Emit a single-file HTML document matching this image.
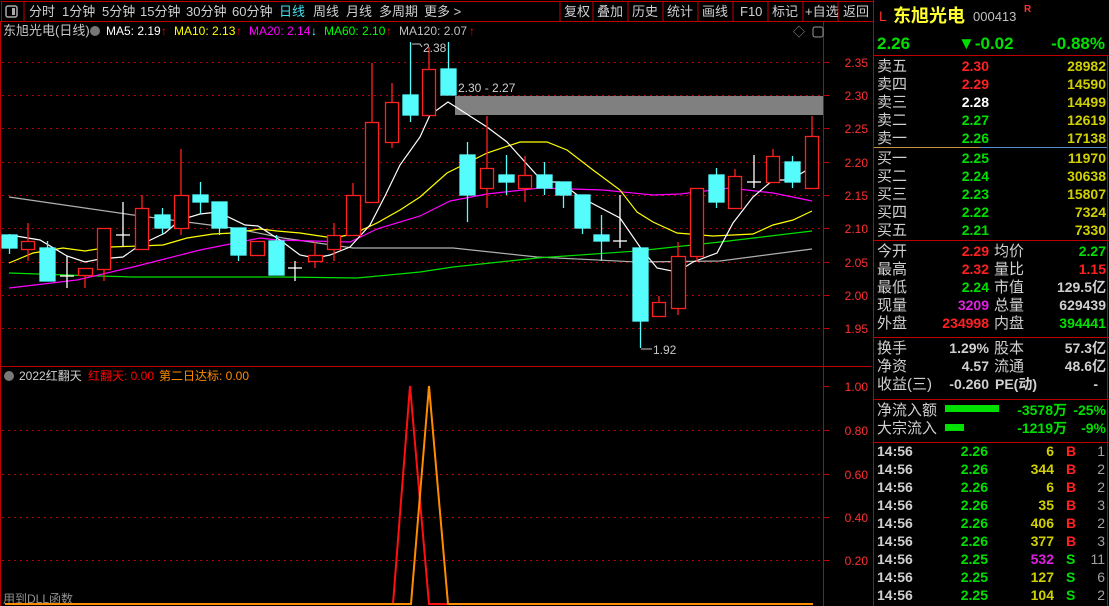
<!DOCTYPE html>
<html><head><meta charset="utf-8"><style>
html,body{margin:0;padding:0;background:#000;width:1109px;height:606px;overflow:hidden}
svg{display:block}
text{font-family:"Liberation Sans","Noto Sans CJK SC",sans-serif}
</style></head><body>
<svg width="1109" height="606" viewBox="0 0 1109 606" xmlns="http://www.w3.org/2000/svg">
<rect width="1109" height="606" fill="#000"/>
<g stroke="#c00000" stroke-width="1" fill="none">
<rect x="1.5" y="1.5" width="872" height="20"/>
<line x1="24" y1="2" x2="24" y2="21"/>
<line x1="560" y1="2" x2="560" y2="21"/>
<line x1="593" y1="2" x2="593" y2="21"/><line x1="628" y1="2" x2="628" y2="21"/><line x1="663" y1="2" x2="663" y2="21"/><line x1="698" y1="2" x2="698" y2="21"/><line x1="733" y1="2" x2="733" y2="21"/><line x1="768" y1="2" x2="768" y2="21"/><line x1="803" y1="2" x2="803" y2="21"/><line x1="838" y1="2" x2="838" y2="21"/>
<line x1="0.5" y1="21" x2="0.5" y2="606"/>
<line x1="823.5" y1="21" x2="823.5" y2="606"/>
<line x1="0" y1="366.5" x2="872" y2="366.5"/>
<line x1="873.5" y1="0" x2="873.5" y2="606"/>
<line x1="873" y1="55.5" x2="1109" y2="55.5"/>
<line x1="873" y1="240.5" x2="1109" y2="240.5"/>
<line x1="873" y1="337.5" x2="1109" y2="337.5"/>
<line x1="873" y1="399.5" x2="1109" y2="399.5"/>
<line x1="873" y1="442.5" x2="1109" y2="442.5"/>
<line x1="1107.5" y1="55" x2="1107.5" y2="606"/>
</g>
<line x1="874" y1="147.5" x2="980" y2="147.5" stroke="#c89040"/>
<line x1="980" y1="147.5" x2="1107" y2="147.5" stroke="#5090d0"/>
<rect x="6" y="6" width="11" height="11" rx="2" fill="none" stroke="#aaa" stroke-width="1.5"/><rect x="12" y="8" width="3" height="7" fill="#aaa"/>
<g font-size="13" fill="#d0d0d0">
<text x="29" y="16">分时</text><text x="62" y="16">1分钟</text><text x="102" y="16">5分钟</text><text x="140" y="16">15分钟</text><text x="186" y="16">30分钟</text><text x="232" y="16">60分钟</text><text x="279" y="16" fill="#40e0f0">日线</text><text x="313" y="16">周线</text><text x="346" y="16">月线</text><text x="379" y="16">多周期</text><text x="424" y="16">更多 &gt;</text>
<text x="564" y="16">复权</text><text x="597" y="16">叠加</text><text x="632" y="16">历史</text><text x="667" y="16">统计</text><text x="702" y="16">画线</text><text x="740" y="16">F10</text><text x="772" y="16">标记</text><text x="805" y="16">+自选</text><text x="843" y="16">返回</text>
</g>
<g font-size="12">
<text x="3" y="35" fill="#c8c8c8" font-size="13">东旭光电(日线)</text>
<circle cx="95" cy="31" r="5" fill="#777"/>
<text x="106" y="35" fill="#fff">MA5: 2.19</text><text x="161" y="35" fill="#f00">↑</text>
<text x="174" y="35" fill="#ff0">MA10: 2.13</text><text x="236" y="35" fill="#f00">↑</text>
<text x="249" y="35" fill="#f0f">MA20: 2.14</text><text x="311" y="35" fill="#4ff">↓</text>
<text x="324" y="35" fill="#0f0">MA60: 2.10</text><text x="386" y="35" fill="#f00">↑</text>
<text x="399" y="35" fill="#c0c0c0">MA120: 2.07</text><text x="469" y="35" fill="#f00">↑</text>
</g>
<text x="793" y="36" font-size="12" fill="#999">◇</text>
<rect x="813" y="27" width="10" height="10" rx="2" fill="none" stroke="#999"/>
<g stroke="#b00000" stroke-dasharray="2,4" stroke-width="1">
<line x1="2" y1="62.5" x2="823" y2="62.5"/><line x1="2" y1="95.5" x2="823" y2="95.5"/><line x1="2" y1="128.5" x2="823" y2="128.5"/><line x1="2" y1="162.5" x2="823" y2="162.5"/><line x1="2" y1="195.5" x2="823" y2="195.5"/><line x1="2" y1="228.5" x2="823" y2="228.5"/><line x1="2" y1="262.5" x2="823" y2="262.5"/><line x1="2" y1="295.5" x2="823" y2="295.5"/><line x1="2" y1="328.5" x2="823" y2="328.5"/>
<line x1="2" y1="430.5" x2="823" y2="430.5"/><line x1="2" y1="474.5" x2="823" y2="474.5"/><line x1="2" y1="517.5" x2="823" y2="517.5"/><line x1="2" y1="560.5" x2="823" y2="560.5"/>
</g>
<g stroke="#c00000">
<line x1="823" y1="62.5" x2="829" y2="62.5"/><line x1="823" y1="95.5" x2="829" y2="95.5"/><line x1="823" y1="128.5" x2="829" y2="128.5"/><line x1="823" y1="162.5" x2="829" y2="162.5"/><line x1="823" y1="195.5" x2="829" y2="195.5"/><line x1="823" y1="228.5" x2="829" y2="228.5"/><line x1="823" y1="262.5" x2="829" y2="262.5"/><line x1="823" y1="295.5" x2="829" y2="295.5"/><line x1="823" y1="328.5" x2="829" y2="328.5"/>
<line x1="823" y1="386.5" x2="829" y2="386.5"/><line x1="823" y1="430.5" x2="829" y2="430.5"/><line x1="823" y1="474.5" x2="829" y2="474.5"/><line x1="823" y1="517.5" x2="829" y2="517.5"/><line x1="823" y1="560.5" x2="829" y2="560.5"/>
</g>
<g font-size="12" fill="#ff3030" text-anchor="end">
<text x="868" y="67">2.35</text><text x="868" y="100">2.30</text><text x="868" y="133">2.25</text><text x="868" y="167">2.20</text><text x="868" y="200">2.15</text><text x="868" y="233">2.10</text><text x="868" y="267">2.05</text><text x="868" y="300">2.00</text><text x="868" y="333">1.95</text>
<text x="868" y="391">1.00</text><text x="868" y="435">0.80</text><text x="868" y="479">0.60</text><text x="868" y="522">0.40</text><text x="868" y="565">0.20</text>
</g>
<rect x="455" y="96" width="368" height="19" fill="#808080"/>
<text x="458" y="92" font-size="12" fill="#d0d0d0">2.30 - 2.27</text>
<g fill="none" stroke-width="1.2">
<polyline stroke="#b0b0b0" points="9,197 133,215 233,228 283,238 353,248 420,248 453,248 537,257 637,262 720,261 812,249"/>
<polyline stroke="#00e000" points="9,273 67,275 133,277 283,277 357,278 420,272 453,267 537,258 637,251 720,242 812,231"/>
<polyline stroke="#f0f" points="9,288 77,280 133,267 200,250 260,238 277,240 350,242 377,229 420,216 450,201 487,194 540,188 603,190 653,195 680,194 730,188 773,193 812,201"/>
<polyline stroke="#ff0" points="9,263 33,253 63,248 85,251 110,247 140,246 163,245 187,238 213,234 233,233 260,229 277,231 300,233 333,238 353,234 377,223 400,210 420,197 447,173 487,153 520,142 547,142 567,150 593,170 620,190 637,212 653,222 677,233 713,236 753,234 773,225 793,220 812,211"/>
<polyline stroke="#fff" points="10,235 40,240 67,256 85,262 100,259 123,257 140,245 165,233 180,220 200,214 218,212 245,225 258,226 280,240 300,255 315,258 330,255 350,247 370,225 385,196 400,165 420,137 430,115 448,102 487,127 507,142 543,182 560,182 580,197 620,218 640,247 657,268 677,272 693,262 717,253 733,223 753,197 773,180 790,180 812,167"/>
</g>
<g stroke="#ff2020" fill="#000" stroke-width="1.3">
<rect x="21.5" y="241.5" width="13" height="8"/><line x1="28" y1="223" x2="28" y2="241"/><line x1="28" y1="249" x2="28" y2="261"/>
<rect x="78.5" y="268.5" width="14" height="7"/><line x1="85" y1="275" x2="85" y2="288"/>
<rect x="97.5" y="228.5" width="13" height="41"/><line x1="104" y1="269" x2="104" y2="281"/>
<rect x="135.5" y="208.5" width="13" height="41"/><line x1="142" y1="195" x2="142" y2="208"/>
<rect x="174.5" y="195.5" width="14" height="33"/><line x1="181" y1="149" x2="181" y2="195"/><line x1="181" y1="228" x2="181" y2="235"/>
<rect x="250.5" y="241.5" width="14" height="14"/>
<rect x="308.5" y="255.5" width="14" height="6"/><line x1="315" y1="242" x2="315" y2="255"/><line x1="315" y1="261" x2="315" y2="268"/>
<rect x="327.5" y="235.5" width="13" height="14"/><line x1="334" y1="223" x2="334" y2="235"/><line x1="334" y1="249" x2="334" y2="261"/>
<rect x="346.5" y="195.5" width="14" height="40"/><line x1="353" y1="183" x2="353" y2="195"/>
<rect x="365.5" y="122.5" width="13" height="80"/><line x1="372" y1="63" x2="372" y2="122"/>
<rect x="385.5" y="102.5" width="13" height="40"/><line x1="392" y1="83" x2="392" y2="102"/><line x1="392" y1="142" x2="392" y2="148"/>
<rect x="422.5" y="69.5" width="13" height="46"/><line x1="429" y1="47" x2="429" y2="69"/>
<rect x="480.5" y="168.5" width="13" height="20"/><line x1="487" y1="116" x2="487" y2="168"/><line x1="487" y1="188" x2="487" y2="208"/>
<rect x="518.5" y="175.5" width="13" height="13"/><line x1="525" y1="156" x2="525" y2="175"/><line x1="525" y1="188" x2="525" y2="202"/>
<rect x="652.5" y="302.5" width="13" height="14"/><line x1="659" y1="296" x2="659" y2="302"/>
<rect x="671.5" y="256.5" width="14" height="52"/><line x1="678" y1="242" x2="678" y2="256"/><line x1="678" y1="308" x2="678" y2="315"/>
<rect x="690.5" y="188.5" width="13" height="68"/><line x1="697" y1="256" x2="697" y2="262"/>
<rect x="728.5" y="176.5" width="13" height="32"/><line x1="735" y1="169" x2="735" y2="176"/>
<rect x="766.5" y="156.5" width="13" height="26"/><line x1="773" y1="149" x2="773" y2="156"/>
<rect x="805.5" y="136.5" width="13" height="52"/><line x1="812" y1="116" x2="812" y2="136"/>
</g>
<g stroke="#54fcfc" fill="#54fcfc" stroke-width="1.3">
<rect x="2" y="235" width="15" height="13"/><line x1="9.5" y1="234" x2="9.5" y2="254"/>
<rect x="40" y="248" width="15" height="33"/><line x1="47.5" y1="241" x2="47.5" y2="248"/>
<rect x="155" y="215" width="15" height="13"/><line x1="162.5" y1="208" x2="162.5" y2="234"/>
<rect x="193" y="195" width="15" height="7"/><line x1="200.5" y1="182" x2="200.5" y2="214"/>
<rect x="212" y="202" width="15" height="26"/><line x1="219.5" y1="228" x2="219.5" y2="235"/>
<rect x="231" y="228" width="15" height="27"/><line x1="238.5" y1="255" x2="238.5" y2="261"/>
<rect x="269" y="241" width="15" height="34"/><line x1="276.5" y1="235" x2="276.5" y2="241"/>
<rect x="403" y="95" width="15" height="20"/><line x1="410.5" y1="42" x2="410.5" y2="122"/>
<rect x="441" y="69" width="15" height="26"/><line x1="448.5" y1="42" x2="448.5" y2="69"/>
<rect x="460" y="155" width="15" height="40"/><line x1="467.5" y1="142" x2="467.5" y2="222"/>
<rect x="499" y="175" width="15" height="7"/><line x1="506.5" y1="155" x2="506.5" y2="195"/>
<rect x="537" y="175" width="15" height="13"/><line x1="544.5" y1="162" x2="544.5" y2="195"/>
<rect x="556" y="182" width="15" height="13"/><line x1="563.5" y1="195" x2="563.5" y2="208"/>
<rect x="575" y="195" width="15" height="33"/><line x1="582.5" y1="228" x2="582.5" y2="234"/>
<rect x="594" y="235" width="15" height="6"/><line x1="601.5" y1="215" x2="601.5" y2="261"/>
<rect x="633" y="248" width="15" height="73"/><line x1="640.5" y1="321" x2="640.5" y2="348"/>
<rect x="709" y="175" width="15" height="27"/><line x1="716.5" y1="168" x2="716.5" y2="208"/>
<rect x="785" y="162" width="15" height="20"/><line x1="792.5" y1="156" x2="792.5" y2="188"/>
</g>
<g stroke="#fff" stroke-width="1.3">
<line x1="60" y1="276" x2="74" y2="276"/><line x1="67" y1="256" x2="67" y2="288"/>
<line x1="116" y1="235" x2="130" y2="235"/><line x1="123" y1="202" x2="123" y2="247"/>
<line x1="288" y1="268" x2="302" y2="268"/><line x1="295" y1="261" x2="295" y2="281"/>
<line x1="613" y1="241" x2="627" y2="241"/><line x1="620" y1="195" x2="620" y2="248"/>
<line x1="747" y1="182" x2="761" y2="182"/><line x1="754" y1="155" x2="754" y2="188"/>
</g>
<text x="423" y="52" font-size="12" fill="#c8c8c8">2.38</text>
<polyline points="412,44 420,44 422,47" fill="none" stroke="#c8c8c8"/>
<text x="653" y="354" font-size="12" fill="#c8c8c8">1.92</text>
<line x1="641" y1="349" x2="652" y2="349" stroke="#c8c8c8"/>
<circle cx="9" cy="376" r="5" fill="#777"/>
<g font-size="12">
<text x="19" y="380" fill="#d0d0d0">2022红翻天</text>
<text x="88" y="380" fill="#f00">红翻天: 0.00</text>
<text x="159" y="380" fill="#ff8c00">第二日达标: 0.00</text>
<text x="3" y="603" fill="#909090">用到DLL函数</text>
</g>
<polyline points="393,604 410,386 429,604 448,604" fill="none" stroke="#ff1010" stroke-width="2"/>
<polyline points="5,604 411,604 429,386 448,604 813,604" fill="none" stroke="#ff8c00" stroke-width="2"/>
<line x1="429" y1="604" x2="446" y2="604" stroke="#ff1010" stroke-width="2"/>
<text x="879" y="21" font-size="14" fill="#ff3030">L</text>
<text x="893" y="22" font-size="18" fill="#ffff30" font-weight="bold">东旭光电</text>
<text x="973" y="21" font-size="13" fill="#c0c0c0">000413</text>
<text x="1024" y="12" font-size="10" fill="#ff3030" font-weight="bold">R</text>
<g font-size="17" font-weight="bold" fill="#00e000">
<text x="877" y="49">2.26</text><text x="958" y="49">▼-0.02</text><text x="1105" y="49" text-anchor="end">-0.88%</text>
</g>
<g font-size="14" font-weight="bold">
<g fill="#d0d0d0" font-weight="normal" font-size="15">
<text x="877" y="71">卖五</text><text x="877" y="89">卖四</text><text x="877" y="107">卖三</text><text x="877" y="125">卖二</text><text x="877" y="143">卖一</text>
<text x="877" y="163">买一</text><text x="877" y="181">买二</text><text x="877" y="199">买三</text><text x="877" y="217">买四</text><text x="877" y="235">买五</text>
<text x="877" y="256">今开</text><text x="877" y="274">最高</text><text x="877" y="292">最低</text><text x="877" y="310">现量</text><text x="877" y="328">外盘</text>
<text x="994" y="256">均价</text><text x="994" y="274">量比</text><text x="994" y="292">市值</text><text x="994" y="310">总量</text><text x="994" y="328">内盘</text>
<text x="877" y="353">换手</text><text x="877" y="371">净资</text><text x="877" y="389">收益(三)</text>
<text x="994" y="353">股本</text><text x="994" y="371">流通</text>
<text x="877" y="415">净流入额</text><text x="877" y="433">大宗流入</text>
</g>
<g text-anchor="end">
<text x="989" y="71" fill="#ff2020">2.30</text><text x="989" y="89" fill="#ff2020">2.29</text><text x="989" y="107" fill="#fff">2.28</text><text x="989" y="125" fill="#00e000">2.27</text><text x="989" y="143" fill="#00e000">2.26</text>
<text x="989" y="163" fill="#00e000">2.25</text><text x="989" y="181" fill="#00e000">2.24</text><text x="989" y="199" fill="#00e000">2.23</text><text x="989" y="217" fill="#00e000">2.22</text><text x="989" y="235" fill="#00e000">2.21</text>
<g fill="#d0d000">
<text x="1106" y="71">28982</text><text x="1106" y="89">14590</text><text x="1106" y="107">14499</text><text x="1106" y="125">12619</text><text x="1106" y="143">17138</text>
<text x="1106" y="163">11970</text><text x="1106" y="181">30638</text><text x="1106" y="199">15807</text><text x="1106" y="217">7324</text><text x="1106" y="235">7330</text>
</g>
<text x="989" y="256" fill="#ff2020">2.29</text><text x="989" y="274" fill="#ff2020">2.32</text><text x="989" y="292" fill="#00e000">2.24</text><text x="989" y="310" fill="#e020e0">3209</text><text x="989" y="328" fill="#ff2020">234998</text>
<text x="1106" y="256" fill="#00e000">2.27</text><text x="1106" y="274" fill="#ff2020">1.15</text><text x="1106" y="292" fill="#d0d0d0">129.5亿</text><text x="1106" y="310" fill="#d0d0d0">629439</text><text x="1106" y="328" fill="#00e000">394441</text>
<text x="989" y="353" fill="#d0d0d0">1.29%</text><text x="989" y="371" fill="#d0d0d0">4.57</text><text x="989" y="389" fill="#d0d0d0">-0.260</text>
<text x="1106" y="353" fill="#d0d0d0">57.3亿</text><text x="1106" y="371" fill="#d0d0d0">48.6亿</text><text x="1098" y="389" fill="#d0d0d0">-</text>
<text x="1067" y="415" fill="#00e000">-3578万</text><text x="1106" y="415" fill="#00e000">-25%</text>
<text x="1067" y="433" fill="#00e000">-1219万</text><text x="1106" y="433" fill="#00e000">-9%</text>
</g>
<text x="995" y="389" fill="#d0d0d0">PE(动)</text>
</g>
<rect x="945" y="405" width="54" height="7" fill="#00e000"/>
<rect x="945" y="424" width="19" height="7" fill="#00e000"/>
<g font-size="14" font-weight="bold">
<g fill="#d0d0d0"><text x="877" y="456">14:56</text><text x="877" y="474">14:56</text><text x="877" y="492">14:56</text><text x="877" y="510">14:56</text><text x="877" y="528">14:56</text><text x="877" y="546">14:56</text><text x="877" y="564">14:56</text><text x="877" y="582">14:56</text><text x="877" y="600">14:56</text></g>
<g fill="#00e000" text-anchor="end"><text x="988" y="456">2.26</text><text x="988" y="474">2.26</text><text x="988" y="492">2.26</text><text x="988" y="510">2.26</text><text x="988" y="528">2.26</text><text x="988" y="546">2.26</text><text x="988" y="564">2.25</text><text x="988" y="582">2.25</text><text x="988" y="600">2.25</text></g>
<g fill="#d0d000" text-anchor="end"><text x="1054" y="456">6</text><text x="1054" y="474">344</text><text x="1054" y="492">6</text><text x="1054" y="510">35</text><text x="1054" y="528">406</text><text x="1054" y="546">377</text><text x="1054" y="564" fill="#e020e0">532</text><text x="1054" y="582">127</text><text x="1054" y="600">104</text></g>
<g fill="#ff2020"><text x="1066" y="456">B</text><text x="1066" y="474">B</text><text x="1066" y="492">B</text><text x="1066" y="510">B</text><text x="1066" y="528">B</text><text x="1066" y="546">B</text></g>
<g fill="#00e000"><text x="1066" y="564">S</text><text x="1066" y="582">S</text><text x="1066" y="600">S</text></g>
<g fill="#a0a0a0" text-anchor="end" font-weight="normal"><text x="1105" y="456">1</text><text x="1105" y="474">2</text><text x="1105" y="492">2</text><text x="1105" y="510">3</text><text x="1105" y="528">2</text><text x="1105" y="546">3</text><text x="1105" y="564">11</text><text x="1105" y="582">6</text><text x="1105" y="600">2</text></g>
</g>
</svg>
</body></html>
